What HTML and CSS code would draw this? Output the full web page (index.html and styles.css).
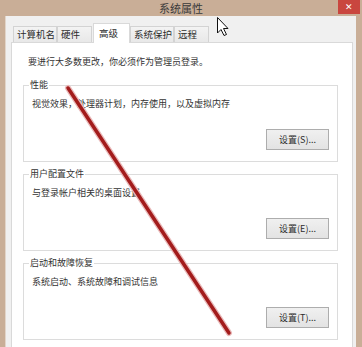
FILE: index.html
```html
<!DOCTYPE html>
<html lang="zh-CN">
  <head>
    <meta charset="UTF-8" />
    <meta name="viewport" content="width=device-width, initial-scale=1.0" />
    <title>系统属性</title>
    <link rel="stylesheet" href="styles.css">
  </head>
  <body>
    <div class="window">
      <div class="titlebar">
        <span></span>
        <span class="title">系统属性</span>
        <button class="close" type="button">✕</button>
      </div>
      <div class="dialog">
        <div class="tabs">
          <div class="tab">计算机名</div>
          <div class="tab">硬件</div>
          <div class="tab active">高级</div>
          <div class="tab">系统保护</div>
          <div class="tab">远程</div>
        </div>
        <div class="panel">
          <p class="note">要进行大多数更改，你必须作为管理员登录。</p>

          <div class="group">
            <div class="group-title">性能</div>
            <p class="desc">视觉效果，处理器计划，内存使用，以及虚拟内存</p>
            <div class="actions"><button type="button">设置(S)...</button></div>
          </div>

          <div class="group">
            <div class="group-title">用户配置文件</div>
            <p class="desc">与登录帐户相关的桌面设置</p>
            <div class="actions"><button type="button">设置(E)...</button></div>
          </div>

          <div class="group">
            <div class="group-title">启动和故障恢复</div>
            <p class="desc">系统启动、系统故障和调试信息</p>
            <div class="actions"><button type="button">设置(T)...</button></div>
          </div>
        </div>
      </div>
    </div>

    <!-- red marker line and mouse pointer drawn over the dialog -->
    <svg class="overlay" width="362" height="347" viewBox="0 0 362 347">
      <line x1="68" y1="88" x2="229" y2="333" stroke="#e9b9b9" stroke-width="6" stroke-linecap="round" />
      <line x1="68" y1="88" x2="229" y2="333" stroke="#a31c1c" stroke-width="3.5" stroke-linecap="round" />
      <path d="M217.5 17.5 L217.5 33 L221 29.5 L224 35.5 L226.5 34.5 L223.5 28.5 L228 28.5 Z" fill="#fff" stroke="#111" stroke-width="1" stroke-linejoin="round" />
    </svg>
  </body>
</html>
```

FILE: styles.css
```css
* {
  box-sizing: border-box;
}

body {
  margin: 0;
  width: 362px;
  height: 347px;
  overflow: hidden;
  position: relative;
  font-family: "Noto Sans CJK SC", "Noto Sans", sans-serif;
  font-size: 9px;
  color: #333;
  background-color: #c9ae97;
}

.window {
  height: 347px;
  display: flex;
  flex-direction: column;
}

.titlebar {
  height: 17px;
  display: grid;
  grid-template-columns: 1fr auto 1fr;
  align-items: start;
}

.title {
  font-size: 11px;
  line-height: 16px;
  color: #3a3a3a;
}

.close {
  justify-self: end;
  width: 22px;
  height: 14px;
  margin-right: 2px;
  padding: 0;
  border: none;
  background-color: #c9463f;
  color: #fff;
  font-size: 9px;
  line-height: 14px;
}

.dialog {
  flex: 1;
  display: flex;
  flex-direction: column;
  margin: 0 6px 0 5px;
  padding: 7px 3px 0 5px;
  background-color: #f0f0f0;
  border-left: 1px solid #e2d5c9;
}

.tabs {
  display: flex;
  align-items: flex-end;
  padding-left: 2px;
  margin-bottom: -1px;
  position: relative;
  z-index: 1;
}

.tab {
  height: 16px;
  min-width: 35px;
  margin-bottom: 1px;
  padding: 0 1px 0 3px;
  border: 1px solid #d3d3d3;
  border-bottom: none;
  background: linear-gradient(#f3f3f3, #e8e8e8);
  font-size: 9.5px;
  line-height: 15px;
  color: #2b2b2b;
}

.tab.active {
  height: 20px;
  min-width: 37px;
  margin: 0 0 0 1px;
  padding-left: 5px;
  background: #fff;
  border-color: #d9d9d9;
  line-height: 18px;
}

.panel {
  flex: 1;
  padding: 13px 14px 0 11px;
  background-color: #fff;
  border: 1px solid #d9d9d9;
}

.note {
  margin: 0 0 17px 5px;
  line-height: 12px;
}

.group {
  height: 77px;
  margin-bottom: 12px;
  padding: 0 8px 0 7px;
  border: 1px solid #dcdcdc;
}

.group-title {
  width: fit-content;
  margin: -7px 0 0 -2px;
  padding: 0 1px;
  background-color: #fff;
  line-height: 12px;
}

.desc {
  margin: 7px 0 0 1px;
  line-height: 12px;
}

.actions {
  display: flex;
  justify-content: flex-end;
  margin-top: 19px;
}

.actions button {
  width: 63px;
  height: 21px;
  padding: 0;
  border: 1px solid #adadad;
  background: linear-gradient(#f0f0f0, #e3e3e3);
  font-family: "Noto Sans CJK SC", "Noto Sans", sans-serif;
  font-size: 9px;
  color: #2b2b2b;
}

.overlay {
  position: absolute;
  top: 0;
  left: 0;
  pointer-events: none;
}
```
